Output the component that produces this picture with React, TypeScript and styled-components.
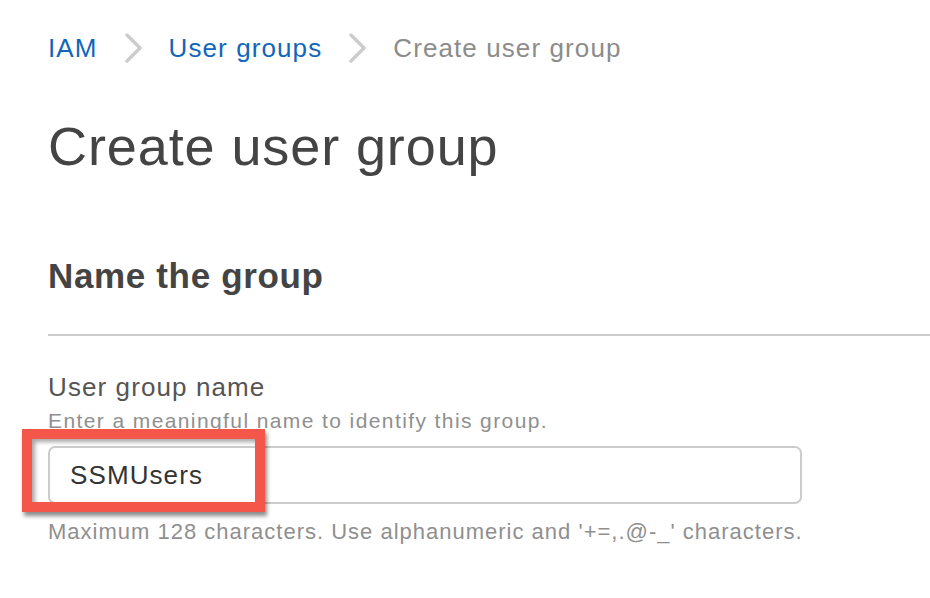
import React from "react";
import styled, { createGlobalStyle } from "styled-components";

const Global = createGlobalStyle`
  html, body { margin: 0; padding: 0; background: #ffffff; }
  body { font-family: "Liberation Sans", Arial, Helvetica, sans-serif; }
`;

const Page = styled.div`
  width: 930px;
  height: 598px;
  overflow: hidden;
  box-sizing: border-box;
  padding: 30px 0 0 48px;
  display: flex;
  flex-direction: column;
`;

const Crumbs = styled.nav`
  display: flex;
  align-items: center;
  height: 36px;
  font-size: 26px;
  letter-spacing: 1.1px;
`;

const CrumbLink = styled.a`
  color: #1166bb;
  text-decoration: none;
`;

const CrumbCurrent = styled.span`
  color: #8c8c8c;
`;

const Sep = styled.span`
  display: flex;
  align-items: center;
  margin: 0 27px 0 26px;
`;

const Title = styled.h1`
  margin: 50px 0 0 0;
  font-size: 54px;
  font-weight: 400;
  color: #444444;
  line-height: 60px;
  letter-spacing: 0.9px;
`;

const SectionTitle = styled.h2`
  margin: 80px 0 0 0;
  font-size: 35px;
  font-weight: 700;
  color: #444444;
  line-height: 40px;
  letter-spacing: 0.65px;
`;

const Divider = styled.hr`
  margin: 38px 0 0 0;
  border: none;
  border-top: 2px solid #cccccc;
  width: 100%;
`;

const Label = styled.div`
  margin-top: 36px;
  font-size: 26px;
  color: #555555;
  line-height: 30px;
  letter-spacing: 1.1px;
`;

const Description = styled.div`
  margin-top: 6px;
  font-size: 21px;
  color: #8f8f8f;
  line-height: 26px;
  letter-spacing: 1.4px;
`;

const InputWrap = styled.div`
  position: relative;
  margin-top: 12px;
  width: 754px;
`;

const Input = styled.div`
  box-sizing: border-box;
  height: 58px;
  border: 2px solid #cccccc;
  border-radius: 7px;
  padding: 0 20px;
  display: flex;
  align-items: center;
  font-size: 26px;
  color: #333333;
  letter-spacing: 1.1px;
`;

const Highlight = styled.div`
  position: absolute;
  left: -26px;
  top: -17px;
  width: 243px;
  height: 83px;
  box-sizing: border-box;
  border: 10px solid #f5564a;
  box-shadow: 2px 4px 4px rgba(0, 0, 0, 0.45), inset 3px 3px 4px rgba(0, 0, 0, 0.35);
  pointer-events: none;
`;

const Hint = styled.div`
  margin-top: 15px;
  font-size: 22px;
  color: #8f8f8f;
  line-height: 26px;
  letter-spacing: 1px;
`;

const Chevron = () => (
  <svg width="18" height="30" viewBox="0 0 18 30">
    <path d="M3 2 L16 15 L3 28" fill="none" stroke="#cccccc" strokeWidth="3.4" strokeLinecap="round" strokeLinejoin="round" />
  </svg>
);

export default function App() {
  return (
    <>
      <Global />
      <Page>
        <Crumbs>
          <CrumbLink href="#">IAM</CrumbLink>
          <Sep><Chevron /></Sep>
          <CrumbLink href="#">User groups</CrumbLink>
          <Sep><Chevron /></Sep>
          <CrumbCurrent>Create user group</CrumbCurrent>
        </Crumbs>
        <Title>Create user group</Title>
        <SectionTitle>Name the group</SectionTitle>
        <Divider />
        <Label>User group name</Label>
        <Description>Enter a meaningful name to identify this group.</Description>
        <InputWrap>
          <Input>SSMUsers</Input>
          <Highlight />
        </InputWrap>
        <Hint>Maximum 128 characters. Use alphanumeric and '+=,.@-_' characters.</Hint>
      </Page>
    </>
  );
}
